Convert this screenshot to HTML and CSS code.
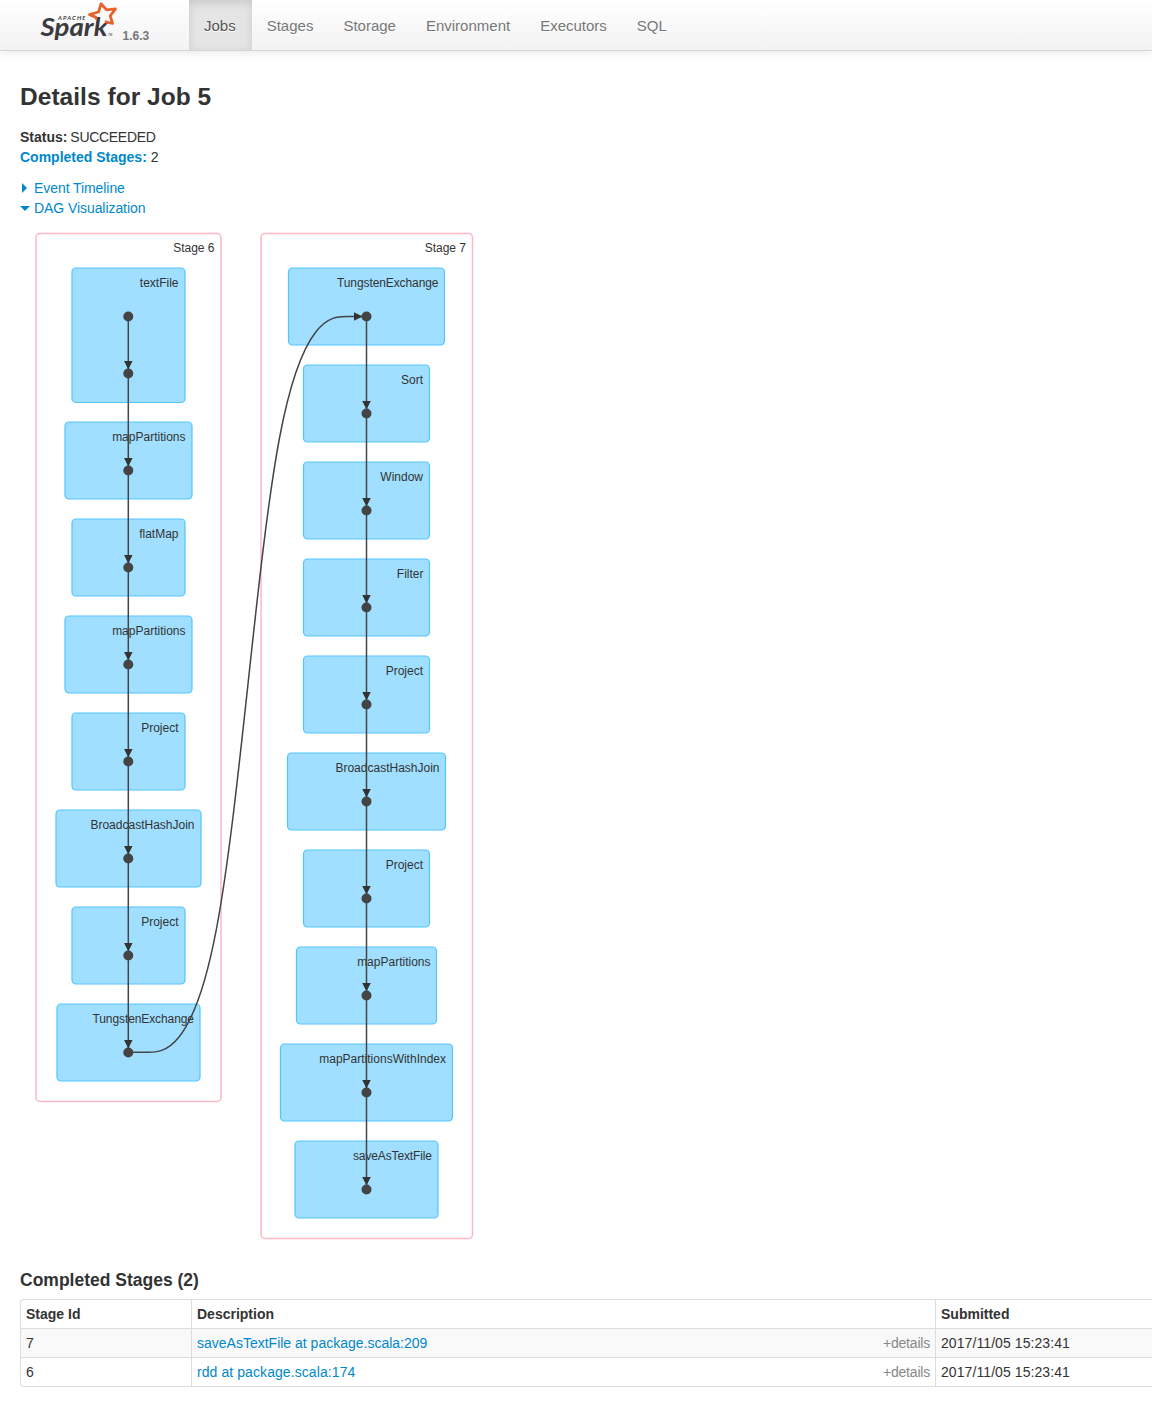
FILE: index.html
```html
<!DOCTYPE html>
<html lang="en">
<head>
<meta charset="utf-8">
<title>Spark - Details for Job 5</title>
<link rel="stylesheet" href="styles.css">
</head>
<body>
<header class="navbar">
  <a class="brand" href="#">
    <svg class="logo" width="82" height="46" viewBox="0 0 82 46">
      <text class="logo-apache" x="21" y="19.800" textLength="27.500">APACHE</text>
      <text class="logo-spark" x="3.500" y="36" textLength="67" lengthAdjust="spacingAndGlyphs">Spark</text>
      <path class="logo-star" d="M59.300 19.500 58.800 17.300 52.500 14.600 61.500 12 64 3.800 69.500 9.800 78.500 8.800 73.200 15.800 75.600 23.500 67.800 21.700"/>
      <text class="logo-tm" x="71" y="36">TM</text>
    </svg>
    <span class="version">1.6.3</span>
  </a>
  <nav class="tabs">
    <a class="tab active" href="#">Jobs</a>
    <a class="tab" href="#">Stages</a>
    <a class="tab" href="#">Storage</a>
    <a class="tab" href="#">Environment</a>
    <a class="tab" href="#">Executors</a>
    <a class="tab" href="#">SQL</a>
  </nav>
</header>
<main class="content">
  <h1 class="title">Details for Job 5</h1>
  <ul class="summary">
    <li><strong>Status:</strong> <span class="status">SUCCEEDED</span></li>
    <li><a href="#"><strong>Completed Stages:</strong></a> 2</li>
  </ul>
  <div class="toggles">
    <a class="toggle" href="#"><span class="arrow closed"></span>Event Timeline</a>
    <a class="toggle" href="#"><span class="arrow open"></span>DAG Visualization</a>
  </div>
  <svg class="dag" width="480" height="1020" viewBox="20 225 480 1020">
    <defs>
      <marker id="arrow" viewBox="0 0 10 10" refX="10" refY="5" markerWidth="9" markerHeight="9" markerUnits="userSpaceOnUse" orient="auto"><path class="head" d="M0 0 10 5 0 10z"/></marker>
    </defs>
    <g class="stage">
      <rect x="36" y="233.5" width="185" height="868" rx="4"/>
      <rect x="261" y="233.5" width="211.5" height="1005" rx="4"/>
    </g>
    <g class="op">
      <rect x="72" y="268" width="113" height="134.5" rx="4"/>
      <rect x="65" y="422" width="127" height="77" rx="4"/>
      <rect x="72" y="519" width="113" height="77" rx="4"/>
      <rect x="65" y="616" width="127" height="77" rx="4"/>
      <rect x="72" y="713" width="113" height="77" rx="4"/>
      <rect x="56" y="810" width="145" height="77" rx="4"/>
      <rect x="72" y="907" width="113" height="77" rx="4"/>
      <rect x="57" y="1004" width="143" height="77" rx="4"/>
      <rect x="288.5" y="268" width="156" height="77" rx="4"/>
      <rect x="303.5" y="365" width="126" height="77" rx="4"/>
      <rect x="303.5" y="462" width="126" height="77" rx="4"/>
      <rect x="303.5" y="559" width="126" height="77" rx="4"/>
      <rect x="303.5" y="656" width="126" height="77" rx="4"/>
      <rect x="287.5" y="753" width="158" height="77" rx="4"/>
      <rect x="303.5" y="850" width="126" height="77" rx="4"/>
      <rect x="296.5" y="947" width="140" height="77" rx="4"/>
      <rect x="280.5" y="1044" width="172" height="77" rx="4"/>
      <rect x="295" y="1141" width="143" height="77" rx="4"/>
    </g>
    <g class="label">
      <text x="214.5" y="252">Stage 6</text>
      <text x="178.5" y="287">textFile</text>
      <text x="185.5" y="441">mapPartitions</text>
      <text x="178.5" y="538">flatMap</text>
      <text x="185.5" y="635">mapPartitions</text>
      <text x="178.5" y="732">Project</text>
      <text x="194.5" y="829">BroadcastHashJoin</text>
      <text x="178.5" y="926">Project</text>
      <text x="194" y="1023" textLength="101.5">TungstenExchange</text>
      <text x="466" y="252">Stage 7</text>
      <text x="438.5" y="287" textLength="101.5">TungstenExchange</text>
      <text x="423" y="384">Sort</text>
      <text x="423" y="481">Window</text>
      <text x="423.5" y="578">Filter</text>
      <text x="423" y="675">Project</text>
      <text x="439.5" y="772">BroadcastHashJoin</text>
      <text x="423" y="869">Project</text>
      <text x="430.5" y="966">mapPartitions</text>
      <text x="446" y="1063">mapPartitionsWithIndex</text>
      <text x="432" y="1160" textLength="79">saveAsTextFile</text>
    </g>
    <g class="dot">
      <circle cx="128.3" cy="316.5" r="5"/><circle cx="128.3" cy="373.5" r="5"/>
      <circle cx="128.3" cy="470.5" r="5"/><circle cx="128.3" cy="567.5" r="5"/>
      <circle cx="128.3" cy="664.5" r="5"/><circle cx="128.3" cy="761.5" r="5"/>
      <circle cx="128.3" cy="858.5" r="5"/><circle cx="128.3" cy="955.5" r="5"/>
      <circle cx="128.3" cy="1052.5" r="5"/>
      <circle cx="366.5" cy="316.5" r="5"/><circle cx="366.5" cy="413.5" r="5"/>
      <circle cx="366.5" cy="510.5" r="5"/><circle cx="366.5" cy="607.5" r="5"/>
      <circle cx="366.5" cy="704.5" r="5"/><circle cx="366.5" cy="801.5" r="5"/>
      <circle cx="366.5" cy="898.5" r="5"/><circle cx="366.5" cy="995.5" r="5"/>
      <circle cx="366.5" cy="1092.5" r="5"/><circle cx="366.5" cy="1189.5" r="5"/>
    </g>
    <g class="edge">
      <path d="M128.3 321V369.5"/><path d="M128.3 378V466.5"/><path d="M128.3 475V563.5"/>
      <path d="M128.3 572V660.5"/><path d="M128.3 669V757.5"/><path d="M128.3 766V854.5"/>
      <path d="M128.3 863V951.5"/><path d="M128.3 960V1048.5"/>
      <path d="M366.5 321V409.5"/><path d="M366.5 418V506.5"/><path d="M366.5 515V603.5"/>
      <path d="M366.5 612V700.5"/><path d="M366.5 709V797.5"/><path d="M366.5 806V894.5"/>
      <path d="M366.5 903V991.5"/><path d="M366.5 1000V1088.5"/><path d="M366.5 1097V1185.5"/>
      <path d="M133 1052.3H148C163 1052.3 193 1052.3 216.3 929.7C239.7 807 256.3 561.7 279.3 439C302.3 316.5 331.7 316.5 346.3 316.5H362.5"/>
    </g>
  </svg>
  <h2 class="subtitle">Completed Stages (2)</h2>
  <table class="stages">
    <colgroup><col class="c-id"><col class="c-desc"><col class="c-sub"></colgroup>
    <thead><tr><th>Stage Id</th><th>Description</th><th>Submitted</th></tr></thead>
    <tbody>
      <tr><td>7</td><td><div class="desc"><a href="#">saveAsTextFile at package.scala:209</a><span class="details">+details</span></div></td><td class="time">2017/11/05 15:23:41</td></tr>
      <tr><td>6</td><td><div class="desc"><a class="rdd" href="#">rdd at package.scala:174</a><span class="details">+details</span></div></td><td class="time">2017/11/05 15:23:41</td></tr>
    </tbody>
  </table>
</main>
</body>
</html>
```
FILE: styles.css
```css
body {
  margin: 0;
  background: #fff;
  color: #333;
  font: 14px/20px "Liberation Sans", Arial, sans-serif;
}
a { color: #08c; text-decoration: none; }

.navbar {
  display: flex;
  height: 50px;
  border-bottom: 1px solid #d4d4d4;
  background: linear-gradient(#fff, #f2f2f2);
  box-shadow: 0 1px 10px rgba(0, 0, 0, .1);
}
.brand {
  display: flex;
  box-sizing: border-box;
  width: 189px;
  padding-left: 37px;
}
.version {
  margin: 26px 0 0 3.5px;
  color: #777;
  font-size: 12px;
  font-weight: bold;
}
.logo text { fill: #3c3a3e; }
.logo .logo-spark { font: italic 700 25px Lato, sans-serif; }
.logo .logo-apache { font: italic 700 6px Lato, sans-serif; }
.logo .logo-tm { font: 3px "Liberation Sans", sans-serif; }
.logo-star {
  fill: none;
  stroke: #e8622c;
  stroke-width: 2.8;
  stroke-linejoin: round;
}
.tabs { display: flex; }
.tab {
  padding: 16px 15px 14px;
  color: #777;
  font-size: 15px;
  text-shadow: 0 1px 0 #fff;
}
.tab.active {
  padding-right: 16px;
  background: #e5e5e5;
  box-shadow: inset 0 3px 8px rgba(0, 0, 0, .125);
  color: #555;
}

.content { padding: 0 20px; }
.title {
  margin: 26px 0 10px;
  font-size: 24.5px;
  line-height: 40px;
  letter-spacing: .04px;
}
.summary { margin: 0 0 11px; padding: 0; list-style: none; }
.status { margin-left: -1px; letter-spacing: -.3px; }
.toggles { display: flex; flex-direction: column; }
.toggle { display: flex; align-items: center; letter-spacing: -.07px; }
.arrow { box-sizing: border-box; margin-right: 4px; width: 10px; height: 10px; }
.arrow.closed {
  margin-left: 2px;
  width: 5px;
  margin-right: 7px;
  border-left: 5px solid #08c;
  border-top: 5px solid transparent;
  border-bottom: 5px solid transparent;
}
.arrow.open {
  height: 5px;
  border-top: 5px solid #08c;
  border-left: 5px solid transparent;
  border-right: 5px solid transparent;
}

.dag { display: block; margin-top: 7px; }
.stage rect { fill: #fff; stroke: #ffb6c5; stroke-width: 1.5; }
.op rect { fill: #a0dfff; stroke: #52c5ff; stroke-width: 1.2; }
.label text { fill: #333; font-size: 12px; text-anchor: end; }
.dot circle { fill: #444; }
.edge path { fill: none; stroke: #444; stroke-width: 1.5; marker-end: url(#arrow); }
.head { fill: #333; }

.subtitle { margin: 25px 0 9px; font-size: 17.5px; line-height: 20px; }
.stages {
  width: calc(100% + 20px);
  margin-right: -20px;
  table-layout: fixed;
  border: 1px solid #ddd;
  border-right: 0;
  border-collapse: separate;
  border-spacing: 0;
  border-radius: 4px 0 0 4px;
}
.c-id { width: 170px; }
.c-desc { width: 744px; }
.stages th, .stages td {
  height: 20px;
  padding: 4px 5px;
  border-left: 1px solid #ddd;
  text-align: left;
}
.stages th:first-child, .stages td:first-child { border-left: 0; }
.stages td { border-top: 1px solid #ddd; }
.stages tbody tr:first-child td { background: #f9f9f9; }
.stages .time { letter-spacing: .08px; }
.rdd { letter-spacing: .08px; }
.desc { display: flex; justify-content: space-between; }
.details { color: #888; letter-spacing: -.2px; }
```
